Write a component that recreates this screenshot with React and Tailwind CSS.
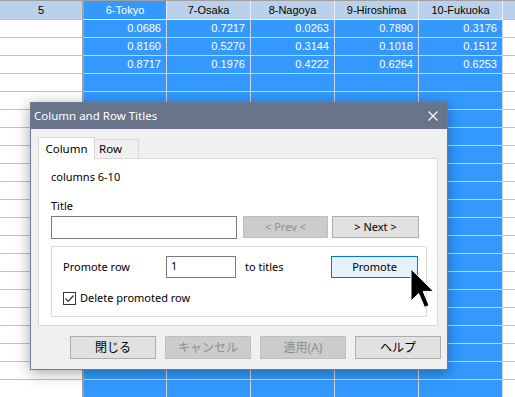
import React from 'react';

const cols = ['6-Tokyo', '7-Osaka', '8-Nagoya', '9-Hiroshima', '10-Fukuoka'];
const data = [
    ['0.0686', '0.7217', '0.0263', '0.7890', '0.3176'],
    ['0.8160', '0.5270', '0.3144', '0.1018', '0.1512'],
    ['0.8717', '0.1976', '0.4222', '0.6264', '0.6253'],
];
const rowCount = 22;

function Sheet() {
    return (
        <div className="flex flex-col font-['Liberation_Sans',Arial,sans-serif] text-[11px]">
            {/* header */}
            <div className="flex h-[20px] border-t border-[#a0a0a0]">
                <div className="w-[84px] shrink-0 bg-[#b9d1ea] border-r-2 border-b border-r-[#a0a0a0] border-b-[#c0c0c0] flex items-center justify-center text-black">
                    5
                </div>
                {cols.map((c, i) => (
                    <div
                        key={c}
                        className={
                            (i === 0 ? 'w-[83px] bg-[#3399ff] text-white ' : 'w-[84px] bg-[#b9d1ea] text-black ') +
                            'shrink-0 border-r border-b border-r-[#e8eef5] border-b-[#f0f4f8] flex items-center justify-center'
                        }
                    >
                        {c}
                    </div>
                ))}
                <div className="flex-1 bg-[#b9d1ea] border-b border-[#c0c0c0]" />
            </div>

            {/* rows */}
            {Array.from({ length: rowCount }).map((_, r) => (
                <div key={r} className="flex h-[18px]">
                    <div className="w-[84px] shrink-0 bg-white border-r-2 border-b border-r-[#a0a0a0] border-b-[#c0c0c0]" />
                    {cols.map((c, i) => (
                        <div
                            key={c}
                            className={
                                (i === 0 ? 'w-[83px] ' : 'w-[84px] ') +
                                'shrink-0 bg-[#3399ff] border-r border-b border-[#d2d6dc] text-white flex items-center justify-end pr-[5px]'
                            }
                        >
                            {data[r] ? data[r][i] : ''}
                        </div>
                    ))}
                    <div className="flex-1 bg-white border-b border-[#c0c0c0]" />
                </div>
            ))}
        </div>
    );
}

function Btn({ children, disabled, primary, className = '' }) {
    let look = 'bg-[#e1e1e1] border-[#adadad] text-black';
    if (disabled) look = 'bg-[#cccccc] border-[#bfbfbf] text-[#8f8f8f]';
    if (primary) look = 'bg-[#e5f1fb] border-[#0078d7] text-black';
    return (
        <div className={`border flex items-center justify-center shrink-0 ${look} ${className}`}>
            {children}
        </div>
    );
}

function Dialog() {
    return (
        <div className="absolute left-[30px] top-[102px] w-[418px] h-[268px] bg-[#f0f0f0] border border-[#6b7a8f] shadow-[0_3px_14px_rgba(0,0,0,0.35)] flex flex-col font-['Noto_Sans','Noto_Sans_CJK_JP',sans-serif] text-[11px] text-black leading-[16px]">
            {/* title bar */}
            <div className="h-[26px] shrink-0 bg-[#677489] flex items-center justify-between pl-[3px] pr-[9px] text-white text-[11.5px]">
                <span>Column and Row Titles</span>
                <svg width="10" height="10" viewBox="0 0 10 10">
                    <path d="M0.5 0.5 L9.5 9.5 M9.5 0.5 L0.5 9.5" stroke="white" strokeWidth="1.2" />
                </svg>
            </div>

            {/* tabs + panel */}
            <div className="pl-[7px] pt-[8px]">
                <div className="flex items-end h-[22px] relative z-10 -mb-px">
                    <div className="w-[57px] h-[22px] bg-white border border-b-0 border-[#d9d9d9] flex items-center justify-center text-[11.5px]">
                        Column
                    </div>
                    <div className="w-[44px] h-[20px] bg-[#f0f0f0] border border-l-0 border-[#d9d9d9] flex items-center pl-[4px] text-[11.5px]">
                        Row
                    </div>
                </div>
                <div className="w-[400px] h-[168px] bg-white border border-[#d9d9d9] pl-[12px] pt-[10px] flex flex-col">
                    <div>columns 6-10</div>
                    <div className="mt-[13px]">Title</div>
                    <div className="mt-[2px] flex items-start">
                        <div className="w-[186px] h-[23px] bg-white border border-[#7a7a7a]" />
                        <Btn disabled className="ml-[6px] w-[85px] h-[22px]">&lt; Prev &lt;</Btn>
                        <Btn className="ml-[4px] w-[87px] h-[22px]">&gt; Next &gt;</Btn>
                    </div>
                    <div className="mt-[7px] w-[376px] h-[71px] border border-[#dcdcdc] pl-[11px] pr-[8px] pt-[9px] flex flex-col">
                        <div className="flex items-center h-[22px]">
                            <span className="w-[103px]">Promote row</span>
                            <div className="w-[70px] h-[22px] bg-white border border-[#7a7a7a] pl-[4px] leading-[18px]">1</div>
                            <span className="ml-[9px]">to titles</span>
                            <Btn primary className="ml-auto w-[87px] h-[22px]">Promote</Btn>
                        </div>
                        <div className="mt-[12px] flex items-center">
                            <div className="w-[13px] h-[13px] border border-[#333333] bg-white flex items-center justify-center">
                                <svg width="11" height="11" viewBox="0 0 11 11">
                                    <path d="M1.5 5.5 L4.2 8.3 L9.5 2.5" fill="none" stroke="#333333" strokeWidth="1.2" />
                                </svg>
                            </div>
                            <span className="ml-[4px]">Delete promoted row</span>
                        </div>
                    </div>
                </div>
            </div>

            {/* bottom buttons */}
            <div className="mt-[10px] flex justify-end pr-[6px] gap-[9px] text-[12px]">
                <Btn className="w-[86px] h-[23px]">閉じる</Btn>
                <Btn disabled className="w-[86px] h-[23px]">キャンセル</Btn>
                <Btn disabled className="w-[86px] h-[23px]">適用(A)</Btn>
                <Btn className="w-[86px] h-[23px]">ヘルプ</Btn>
            </div>
        </div>
    );
}

export default function App() {
    return (
        <div className="relative w-[515px] h-[397px] overflow-hidden bg-white">
            <Sheet />
            <Dialog />
            {/* mouse pointer */}
            <svg className="absolute left-[410px] top-[268px]" width="25" height="41" viewBox="0 0 12.5 20.5">
                <path
                    d="M0.5 0.5 V16.5 L4.3 12.7 L7.3 19.7 L9.5 18.7 L6.6 11.7 H11.8 Z"
                    fill="black"
                    stroke="white"
                    strokeWidth="0.5"
                    strokeLinejoin="miter"
                />
            </svg>
        </div>
    );
}
